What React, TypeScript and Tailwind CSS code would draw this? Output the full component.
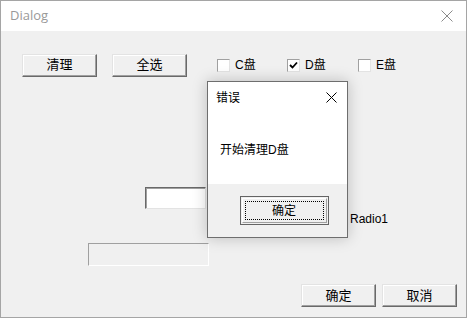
import React from 'react';

const font = { fontFamily: '"Liberation Sans", "Noto Sans CJK SC", sans-serif' };

const Btn: React.FC<{ label: string; w?: string }> = ({ label, w = 'w-[75px]' }) => (
  <div
    className={`${w} h-[23px] flex items-center justify-center bg-[#f0f0f0] text-[13px] text-black border border-t-[#e3e3e3] border-l-[#e3e3e3] border-b-[#696969] border-r-[#696969] shadow-[inset_-1px_-1px_0_#a0a0a0,inset_1px_1px_0_#ffffff]`}
  >
    {label}
  </div>
);

const Check: React.FC<{ label: string; checked?: boolean; w: string }> = ({ label, checked, w }) => (
  <div className={`${w} flex items-center gap-[5px] text-[12px] text-black`}>
    <div className="w-[13px] h-[13px] bg-white border border-t-[#a0a0a0] border-l-[#a0a0a0] border-b-[#e3e3e3] border-r-[#e3e3e3] flex items-center justify-center">
      {checked && (
        <svg width="9" height="9" viewBox="0 0 9 9">
          <path d="M1 4 L3.5 6.5 L8 1.5" stroke="#000" strokeWidth="1.8" fill="none" />
        </svg>
      )}
    </div>
    <span>{label}</span>
  </div>
);

const App: React.FC = () => {
  return (
    <div style={font} className="w-[467px] h-[318px] flex flex-col border border-[#a5a5a5] bg-[#f0f0f0] overflow-hidden">
      {/* title bar */}
      <div className="h-[30px] bg-white flex items-center justify-between pl-[9px] pr-[9px] shrink-0">
        <span className="text-[13px] text-[#999999]" style={{ fontFamily: '"Open Sans", "Noto Sans", sans-serif' }}>
          Dialog
        </span>
        <svg width="12" height="12" viewBox="0 0 12 12" className="mr-[4px]">
          <path d="M0.5 0.5 L11.5 11.5 M11.5 0.5 L0.5 11.5" stroke="#8a8a8a" strokeWidth="1" />
        </svg>
      </div>

      {/* body */}
      <div className="relative flex-1 flex flex-col">
        <div className="mt-[23px] ml-[21px] flex items-center h-[22px]">
          <Btn label="清理" />
          <div className="w-[15px]" />
          <Btn label="全选" />
          <div className="w-[30px]" />
          <Check label="C盘" w="w-[70px]" />
          <Check label="D盘" checked w="w-[71px]" />
          <Check label="E盘" w="w-[70px]" />
        </div>

        <div className="mt-[111px] flex items-start">
          <div className="ml-[144px] w-[61px] h-[22px] bg-white border border-t-[#696969] border-l-[#696969] border-b-[#e3e3e3] border-r-[#e3e3e3] shadow-[inset_1px_1px_0_#a0a0a0]" />
          <div className="ml-[128px] mt-[23px] flex items-center gap-[4px] text-[12px] text-black">
            <div className="w-[12px] h-[12px] rounded-full bg-white border border-[#a0a0a0]" />
            <span>Radio1</span>
          </div>
        </div>

        <div className="mt-[15px] ml-[87px] w-[121px] h-[23px] border border-t-[#a0a0a0] border-l-[#a0a0a0] border-b-white border-r-white" />

        <div className="mt-auto flex justify-end gap-[6px] pr-[9px] pb-[10px]">
          <Btn label="确定" />
          <Btn label="取消" />
        </div>

        {/* message box */}
        <div className="absolute left-[206px] top-[50px] w-[141px] h-[157px] flex flex-col border border-[#6e6e6e] bg-[#f0f0f0] shadow-[0_0_14px_rgba(0,0,0,0.22)]">
          <div className="h-[102px] bg-white flex flex-col">
            <div className="h-[31px] flex items-center justify-between pl-[8px] pr-[10px]">
              <span className="text-[12px] text-black">错误</span>
              <svg width="11" height="11" viewBox="0 0 11 11">
                <path d="M0.5 0.5 L10.5 10.5 M10.5 0.5 L0.5 10.5" stroke="#000" strokeWidth="1" />
              </svg>
            </div>
            <div className="mt-[28px] ml-[12px] text-[12px] text-black">开始清理D盘</div>
          </div>
          <div className="flex-1 flex justify-center items-start pt-[12px] pl-[31px]">
            <div className="w-[89px] h-[29px] border border-[#646464] p-[1px]">
              <div className="w-full h-full bg-[#f0f0f0] border border-t-white border-l-white border-b-[#a0a0a0] border-r-[#a0a0a0] p-[2px]">
                <div className="w-full h-full border border-dotted border-black flex items-center justify-center text-[12px] text-black">
                  确定
                </div>
              </div>
            </div>
            <div className="w-[18px]" />
          </div>
        </div>
      </div>
    </div>
  );
};

export default App;
